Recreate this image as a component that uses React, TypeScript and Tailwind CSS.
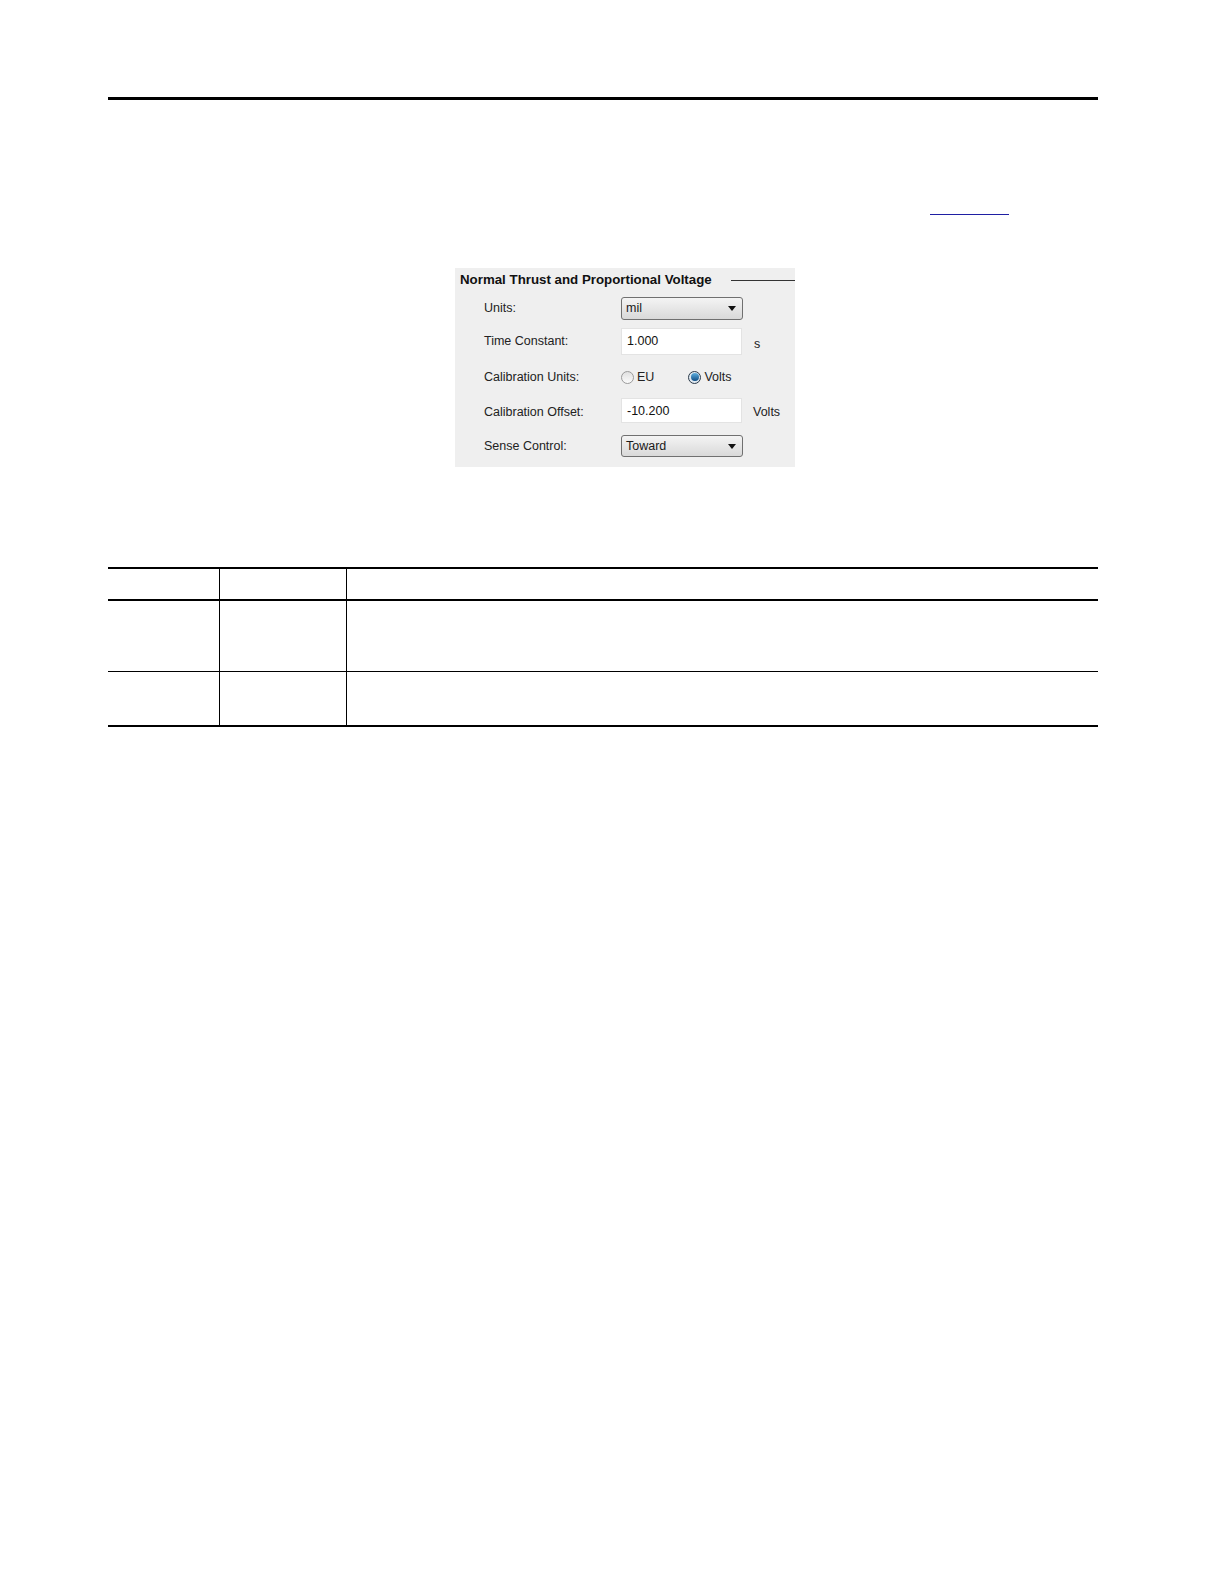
import type { ReactNode } from "react";

const font = { fontFamily: '"Liberation Sans", Arial, sans-serif' };

function DropArrow() {
  return (
    <svg width="8" height="5" viewBox="0 0 8 5" className="shrink-0">
      <path d="M0 0 L8 0 L4 5 Z" fill="#111" />
    </svg>
  );
}

function Select({ value, height }: { value: string; height: string }) {
  return (
    <div
      className={`flex w-[122px] ${height} items-center justify-between rounded-[3px] border border-[#707070] bg-gradient-to-b from-[#f4f4f4] to-[#d9d9d9] pl-[4px] pr-[6px] text-[12.5px] text-[#1a1a1a]`}
    >
      <span>{value}</span>
      <DropArrow />
    </div>
  );
}

function TextBox({ value, height }: { value: string; height: string }) {
  return (
    <div
      className={`flex w-[121px] ${height} items-start border border-[#e3e3e3] bg-white pl-[5px] pt-[3px] text-[12.5px] text-[#111]`}
    >
      {value}
    </div>
  );
}

function Radio({ checked }: { checked?: boolean }) {
  return checked ? (
    <span className="flex h-[13px] w-[13px] items-center justify-center rounded-full border border-[#2b3a4a] bg-[#dfe8f0]">
      <span className="h-[8px] w-[8px] rounded-full bg-gradient-to-b from-[#5fb0e0] to-[#0f4f86]" />
    </span>
  ) : (
    <span className="h-[13px] w-[13px] rounded-full border border-[#9a9a9a] bg-gradient-to-b from-[#e0e0e0] to-[#fbfbfb]" />
  );
}

function Row({
  label,
  children,
  className,
  labelClass = "",
}: {
  label: string;
  children: ReactNode;
  className: string;
  labelClass?: string;
}) {
  return (
    <div className={`flex items-center ${className}`}>
      <span className={`w-[137px] shrink-0 text-[12.5px] text-[#222] ${labelClass}`}>{label}</span>
      {children}
    </div>
  );
}

function SettingsPanel() {
  return (
    <div className="ml-[347px] mt-[53px] w-[340px] bg-[#efefef] pb-[10px]" style={font}>
      <div className="flex h-[24px] items-center pl-[5px]">
        <span className="text-[13.3px] font-bold text-[#111]">
          Normal Thrust and Proportional Voltage
        </span>
        <span className="ml-[19px] h-px flex-1 bg-[#333]" />
      </div>
      <div className="pl-[29px]">
        <Row label="Units:" className="mt-[5px] h-[23px]">
          <Select value="mil" height="h-[23px]" />
        </Row>
        <Row label="Time Constant:" className="mt-[8px] h-[27px]">
          <TextBox value="1.000" height="h-[27px]" />
          <span className="ml-[12px] mt-[6px] text-[12.5px] text-[#222]">s</span>
        </Row>
        <Row label="Calibration Units:" className="mt-[11px] h-[22px]">
          <div className="flex items-center">
            <Radio />
            <span className="ml-[3px] text-[12.5px] text-[#222]">EU</span>
          </div>
          <div className="ml-[34px] flex items-center">
            <Radio checked />
            <span className="ml-[3px] text-[12.5px] text-[#222]">Volts</span>
          </div>
        </Row>
        <Row label="Calibration Offset:" className="mt-[10px] h-[25px]" labelClass="mt-[4px]">
          <TextBox value="-10.200" height="h-[25px]" />
          <span className="ml-[11px] mt-[3px] text-[12.5px] text-[#222]">Volts</span>
        </Row>
        <Row label="Sense Control:" className="mt-[12px] h-[22px]">
          <Select value="Toward" height="h-[22px]" />
        </Row>
      </div>
    </div>
  );
}

function EmptyTable() {
  return (
    <table className="mt-[100px] w-[990px] border-collapse">
      <thead>
        <tr className="h-[32px] border-t-2 border-b-2 border-black">
          <th className="w-[111px] border-r border-black p-0" />
          <th className="w-[127px] border-r border-black p-0" />
          <th className="p-0" />
        </tr>
      </thead>
      <tbody>
        <tr className="h-[71px] border-b border-black">
          <td className="border-r border-black p-0" />
          <td className="border-r border-black p-0" />
          <td className="p-0" />
        </tr>
        <tr className="h-[55px] border-b-2 border-black">
          <td className="border-r border-black p-0" />
          <td className="border-r border-black p-0" />
          <td className="p-0" />
        </tr>
      </tbody>
    </table>
  );
}

export default function App() {
  return (
    <main className="min-h-[1584px] w-full bg-white">
      <div className="ml-[108px] w-[990px] pt-[97px]">
        <div className="h-[3px] bg-black" />
        <div className="mt-[114px] pl-[822px]">
          <span className="block h-px w-[79px] bg-[#1f1fa3]" />
        </div>
        <SettingsPanel />
        <EmptyTable />
      </div>
    </main>
  );
}
